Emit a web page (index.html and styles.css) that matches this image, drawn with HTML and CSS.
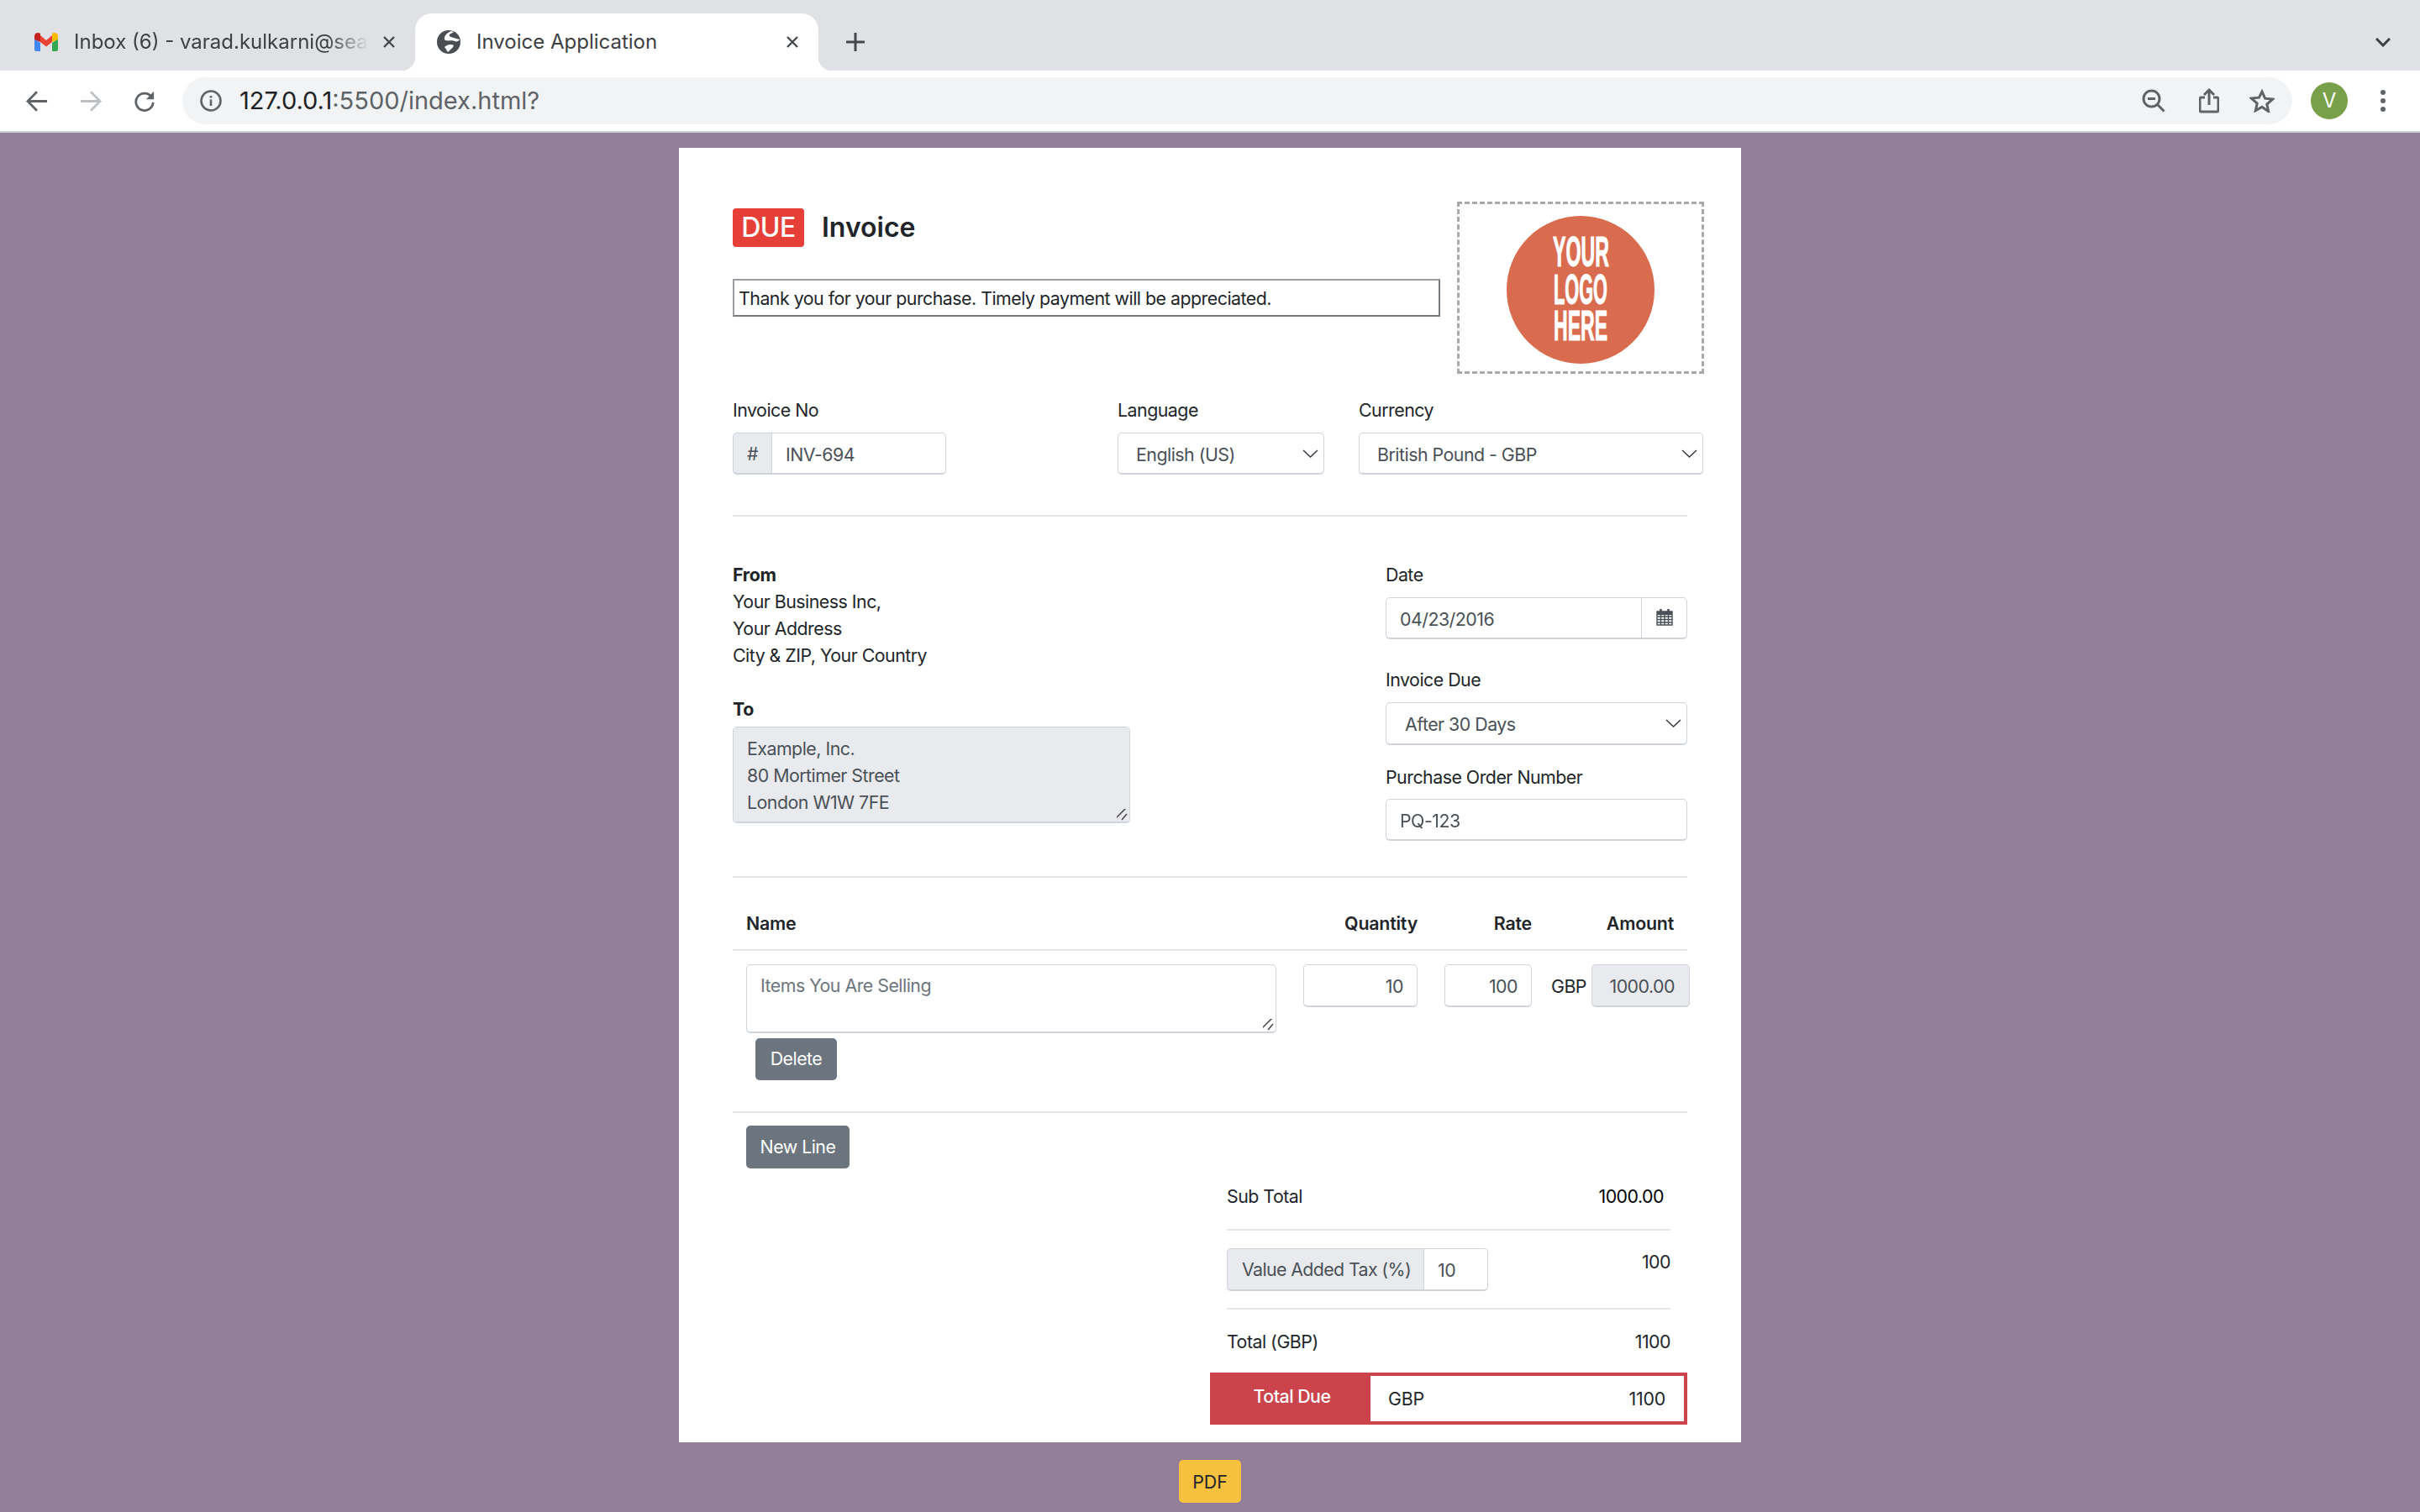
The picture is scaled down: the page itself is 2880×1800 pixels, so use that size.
FILE: index.html
```html
<!DOCTYPE html>
<html lang="en">
<head>
  <meta charset="UTF-8" />
  <meta name="viewport" content="width=device-width, initial-scale=1.0"/>
  <title>Invoice Application</title>
  <link rel="stylesheet" href="styles.css">
</head>
<body>
  <!-- Browser window bar -->
  <header class="browser">
    <div class="tab-strip">
      <div class="tab">
        <svg class="tab-icon" viewBox="0 0 30 24" width="30" height="24">
          <path d="M1 8l7 5v10H3a2 2 0 0 1-2-2z" fill="#4285f4"/>
          <path d="M22 13l7-5v13a2 2 0 0 1-2 2h-5z" fill="#34a853"/>
          <path d="M1 9V5C1 1 5.500 0 8 2v10z" fill="#c5221f"/>
          <path d="M22 2c2.500-2 7-1 7 3v4l-7 3z" fill="#fbbc04"/>
          <path d="M8 4l7 6 7-6v8l-7 5.500L8 12z" fill="#ea4335"/>
        </svg>
        <span class="tab-title tab-fade">Inbox (6) - varad.kulkarni@sear</span>
        <svg class="tab-close" viewBox="0 0 16 16" width="16" height="16"><path d="M2 2l12 12M14 2L2 14"/></svg>
      </div>
      <div class="tab tab-active">
        <svg class="tab-icon globe" viewBox="0 0 28 28" width="28" height="28">
          <circle cx="14" cy="14" r="14" fill="#4a4d52"/>
          <path fill="white" d="M17 1C12 3 8 7 9 11c2 3 9 0 12 2 2 1 5 0 6-2-2-1-5-1-7-2-4-1-6-2-5-4 1-1 4-2 5-3z"/>
          <path fill="white" d="M9 20c3-3 8-4 11-2-1 3-3 4-5 6-1 2-2 2-3 1 0-2-2-3-3-5z"/>
        </svg>
        <span class="tab-title">Invoice Application</span>
        <svg class="tab-close" viewBox="0 0 16 16" width="16" height="16"><path d="M2 2l12 12M14 2L2 14"/></svg>
      </div>
      <svg class="new-tab" viewBox="0 0 22 22" width="22" height="22"><path d="M11 0v22M0 11h22"/></svg>
      <svg class="tab-list" viewBox="0 0 18 11" width="18" height="11"><path d="M1 1l8 8 8-8"/></svg>
    </div>
    <div class="toolbar">
      <svg class="nav-icon" viewBox="0 0 28 26" width="26" height="25"><path d="M27 13H3M14 1L2 13l12 12"/></svg>
      <svg class="nav-icon nav-off" viewBox="0 0 28 26" width="26" height="25"><path d="M1 13h24M14 1l12 12-12 12"/></svg>
      <svg class="nav-icon" viewBox="0 0 28 28" width="26" height="26">
        <path d="M23 9a11 11 0 1 0 2 7"/>
        <path class="solid" d="M26 2v10H16z"/>
      </svg>
      <div class="omnibox">
        <svg class="info-icon" viewBox="0 0 26 26" width="26" height="26">
          <circle cx="13" cy="13" r="11.500"/>
          <path d="M13 11.500V19M13 7v2.600"/>
        </svg>
        <span class="url"><b>127.0.0.1</b>:5500/index.html?</span>
        <svg class="omni-icon" viewBox="0 0 28 28" width="28" height="28">
          <circle cx="11.500" cy="11.500" r="9.500"/>
          <path d="M7 11.500h9M18.500 18.500l8 8"/>
        </svg>
        <svg class="omni-icon omni-share" viewBox="0 0 24 30" width="24" height="30">
          <path d="M7 11H3a2 2 0 0 0-2 2v13a2 2 0 0 0 2 2h18a2 2 0 0 0 2-2V13a2 2 0 0 0-2-2h-4"/>
          <path d="M12 20V2M6 8l6-6 6 6"/>
        </svg>
        <svg class="omni-icon" viewBox="0 0 30 28" width="30" height="28">
          <path d="M15 3l3.600 8.200 8.900.9-6.700 5.900 1.900 8.700L15 21.300 7.300 25.700l1.900-8.700-6.700-5.900 8.900-.9z"/>
        </svg>
      </div>
      <div class="avatar">V</div>
      <div class="menu-dots"><i></i><i></i><i></i></div>
    </div>
  </header>

  <main class="sheet">
    <div class="head-row">
      <div class="head-left">
        <div class="title-row">
          <span class="badge-due">DUE</span>
          <h1>Invoice</h1>
        </div>
        <input class="note-input" type="text" value="Thank you for your purchase. Timely payment will be appreciated.">
      </div>
      <div class="logo-box">
        <svg viewBox="0 0 176 176" width="176" height="176">
          <circle cx="88" cy="88" r="88" fill="#d96c4f"/>
          <text transform="translate(55 60) scale(1 2.2)" class="logo-text" textLength="67" lengthAdjust="spacingAndGlyphs">YOUR</text>
          <text transform="translate(56 105) scale(1 2.2)" class="logo-text" textLength="64" lengthAdjust="spacingAndGlyphs">LOGO</text>
          <text transform="translate(56 148) scale(1 2.2)" class="logo-text" textLength="64" lengthAdjust="spacingAndGlyphs">HERE</text>
        </svg>
      </div>
    </div>

    <div class="meta-row">
      <div class="col-invoice">
        <label>Invoice No</label>
        <div class="input-group group-invoice">
          <span class="addon addon-hash">#</span>
          <input class="field" type="text" value="INV-694">
        </div>
      </div>
      <div class="col-language">
        <label>Language</label>
        <select class="field select-field"><option>English (US)</option></select>
      </div>
      <div class="col-currency">
        <label>Currency</label>
        <select class="field select-field"><option>British Pound - GBP</option></select>
      </div>
    </div>

    <hr class="rule rule-meta">

    <div class="address-row">
      <div class="address-left">
        <div><strong>From</strong></div>
        <div>Your Business Inc,</div>
        <div>Your Address</div>
        <div>City &amp; ZIP, Your Country</div>
        <div class="to-label"><strong>To</strong></div>
        <textarea class="field to-field" readonly>Example, Inc.
80 Mortimer Street
London W1W 7FE</textarea>
      </div>
      <div class="address-right">
        <label>Date</label>
        <div class="input-group">
          <input class="field" type="text" value="04/23/2016">
          <span class="addon addon-date">
            <svg viewBox="0 0 20 21" width="20" height="21">
              <path class="cal-fill" d="M1 4h18v4H1z"/>
              <path class="cal-line" d="M1 4h18v16H1zM1 10h18M1 13.500h18M1 17h18M5.500 8v12M10 8v12M14.500 8v12"/>
              <path class="cal-ring" d="M5.500 1v4M14.500 1v4"/>
            </svg>
          </span>
        </div>
        <label class="label-due">Invoice Due</label>
        <select class="field select-field select-due"><option>After 30 Days</option></select>
        <label class="label-order">Purchase Order Number</label>
        <input class="field" type="text" value="PQ-123">
      </div>
    </div>

    <hr class="rule rule-address">

    <div class="items-head">
      <div class="head-name">Name</div>
      <div class="head-num head-qty">Quantity</div>
      <div class="head-num head-rate">Rate</div>
      <div class="head-num head-amount">Amount</div>
    </div>

    <div class="item-line">
      <textarea class="field item-name" placeholder="Items You Are Selling"></textarea>
      <input class="field num-field qty-field" type="text" value="10">
      <input class="field num-field rate-field" type="text" value="100">
      <div class="amount-cell">
        <span class="amount-code">GBP</span>
        <input class="field num-field amount-field" type="text" value="1000.00" readonly>
      </div>
    </div>
    <button class="btn btn-delete">Delete</button>

    <hr class="rule rule-items">
    <button class="btn btn-new">New Line</button>

    <section class="totals">
      <div class="total-row sub-row"><span>Sub Total</span><span class="sub-value">1000.00</span></div>
      <hr class="rule rule-sub">
      <div class="total-row tax-row">
        <div class="input-group group-tax">
          <span class="addon addon-tax">Value Added Tax (%)</span>
          <input class="field" type="text" value="10">
        </div>
        <span>100</span>
      </div>
      <hr class="rule rule-tax">
      <div class="total-row grand-row"><span>Total (GBP)</span><span>1100</span></div>
      <div class="due-box">
        <div class="due-label">Total Due</div>
        <div class="due-value"><span>GBP</span><span>1100</span></div>
      </div>
    </section>
  </main>

  <div class="actions">
    <button class="btn btn-pdf">PDF</button>
  </div>
</body>
</html>
```

FILE: styles.css
```css
* {
  margin: 0;
  padding: 0;
  box-sizing: border-box;
}

html, body {
  height: 1800px;
  overflow: hidden;
}

body {
  font-family: Inter, "Noto Sans", sans-serif;
  font-size: 21.33px;
  line-height: 32px;
  color: #212529;
  background-color: #947f9b;
}

/* Browser bar */
.browser {
  height: 158px;
  background: white;
  border-bottom: 2px solid #d0d1d4;
}
.tab-strip {
  display: flex;
  align-items: flex-start;
  height: 84px;
  padding-top: 16px;
  background-color: #dfe1e5;
}
.tab {
  display: flex;
  align-items: center;
  width: 480px;
  height: 68px;
  padding: 0 23px 0 40px;
  color: #3c4043;
  font-size: 24px;
  position: relative;
}
.tab:first-child {
  width: 494px;
}
.tab-active {
  width: 480px;
  padding-left: 26px;
  color: #3c4043;
  background: white;
  border-radius: 20px 20px 0 0;
}
.tab-active::before,
.tab-active::after {
  content: "";
  position: absolute;
  bottom: 0;
  width: 16px;
  height: 16px;
}
.tab-active::before {
  left: -16px;
  background: radial-gradient(circle at 0 0, transparent 16px, white 16.5px);
}
.tab-active::after {
  right: -16px;
  background: radial-gradient(circle at 100% 0, transparent 16px, white 16.5px);
}
.tab-icon {
  flex: none;
}
.globe {
  margin-right: 19px;
}
.tab-title {
  flex: 1;
  overflow: hidden;
  white-space: nowrap;
}
.tab-fade {
  margin-left: 18px;
  margin-right: 16px;
  -webkit-mask-image: linear-gradient(to right, black 86%, transparent 100%);
  mask-image: linear-gradient(to right, black 86%, transparent 100%);
}
.tab-close {
  flex: none;
  fill: none;
  stroke: #45484d;
  stroke-width: 2.4;
}
.new-tab {
  margin: 23px 0 0 33px;
  fill: none;
  stroke: #45484d;
  stroke-width: 3;
}
.tab-list {
  margin: 29px 0 0 auto;
  margin-right: 35px;
  fill: none;
  stroke: #3c4043;
  stroke-width: 3;
}

.toolbar {
  display: flex;
  align-items: center;
  height: 72px;
  padding-left: 31px;
}
.nav-icon {
  flex: none;
  margin-right: 38px;
  fill: none;
  stroke: #5f6368;
  stroke-width: 3;
}
.nav-off {
  stroke: #bdc1c6;
}
.nav-icon .solid {
  fill: #5f6368;
  stroke: none;
}
.omnibox {
  display: flex;
  align-items: center;
  width: 2511px;
  height: 56px;
  margin-left: -6px;
  padding: 0 21px;
  border-radius: 28px;
  background-color: #f1f3f4;
}
.info-icon {
  flex: none;
  fill: none;
  stroke: #5f6368;
  stroke-width: 2.6;
}
.url {
  flex: 1;
  margin-left: 21px;
  font-size: 29px;
  color: #5f6368;
}
.url b {
  font-weight: 400;
  color: #202124;
}
.omni-icon {
  flex: none;
  margin-left: 36px;
  fill: none;
  stroke: #5f6368;
  stroke-width: 3;
}
.omni-share {
  margin-left: 40px;
}
.avatar {
  flex: none;
  width: 44px;
  height: 44px;
  margin-left: 22px;
  border-radius: 50%;
  background-color: #789f49;
  color: white;
  font-size: 24px;
  line-height: 44px;
  text-align: center;
}
.menu-dots {
  display: flex;
  flex-direction: column;
  gap: 4px;
  margin-left: 39px;
}
.menu-dots i {
  width: 6px;
  height: 6px;
  border-radius: 50%;
  background-color: #5f6368;
}

/* Invoice sheet */
.sheet {
  width: 1264px;
  height: 1541px;
  margin: 18px auto 0;
  padding: 64px 64px 21px;
  background: white;
  letter-spacing: -0.5px;
}
label {
  display: block;
}
strong {
  letter-spacing: -0.3px;
}
.rule {
  border: none;
  height: 2px;
  background-color: #e6e6e6;
}
.head-row {
  display: flex;
  gap: 20px;
  width: 1156px;
  height: 205px;
}
.head-left {
  width: 842px;
  padding-top: 8px;
}
.title-row {
  display: flex;
  align-items: center;
  gap: 21px;
  height: 46px;
}
.badge-due {
  width: 85px;
  height: 46px;
  border-radius: 4px;
  background-color: #e53f37;
  color: white;
  font-size: 32px;
  font-weight: 500;
  line-height: 46px;
  text-align: center;
}
h1 {
  font-size: 32px;
  font-weight: 600;
  line-height: 46px;
  letter-spacing: 0;
}
.note-input {
  display: block;
  width: 842px;
  height: 45px;
  margin-top: 38px;
  padding: 0 5px;
  border: 2px solid #767b80;
  border-top-color: #9a9ea2;
  border-left-color: #9a9ea2;
  font: inherit;
  letter-spacing: inherit;
  color: #212529;
}
.logo-box {
  display: flex;
  align-items: center;
  justify-content: center;
  width: 294px;
  height: 205px;
  padding-top: 5px;
  border: 3px dashed #a9a9a9;
}
.logo-text {
  font-family: "Liberation Sans", sans-serif;
  font-size: 22.5px;
  font-weight: 700;
  letter-spacing: 0;
  fill: white;
  stroke: white;
  stroke-width: 0.5;
}

.field {
  display: block;
  width: 100%;
  height: 50px;
  padding: 2px 16px 0;
  border: 2px solid #ced4da;
  border-width: 1px 1px 2px;
  border-radius: 5px;
  background-color: white;
  font: inherit;
  letter-spacing: inherit;
  color: #495057;
}
.select-field {
  height: 50px;
  padding-left: 21px;
  appearance: none;
  -webkit-appearance: none;
  background: white url("data:image/svg+xml,%3Csvg xmlns='http://www.w3.org/2000/svg' width='19' height='10'%3E%3Cpath d='M1 1l8.500 8 8.500-8' fill='none' stroke='%23343a40' stroke-width='1.500'/%3E%3C/svg%3E") no-repeat right 6px center;
}
textarea::-webkit-resizer {
  width: 20px;
  height: 20px;
  background: url("data:image/svg+xml,%3Csvg xmlns='http://www.w3.org/2000/svg' width='20' height='20'%3E%3Cpath d='M3 17L17 3M11 18l6-7' stroke='%23444' stroke-width='1.500'/%3E%3C/svg%3E") no-repeat right bottom;
}
.input-group {
  display: flex;
  margin-top: 10px;
}
.input-group .field {
  flex: 1;
  min-width: 0;
}
.addon {
  flex: none;
  display: flex;
  align-items: center;
  height: 50px;
  border: 1px solid #ced4da;
  border-bottom-width: 2px;
  background-color: #e9eaee;
  color: #495057;
}
.addon + .field {
  border-left: none;
  border-radius: 0 5px 5px 0;
}
.meta-row {
  display: flex;
  margin-top: 27px;
  width: 1156px;
}
.col-invoice {
  width: 458px;
}
.col-language {
  width: 246px;
  margin-right: 41px;
}
.col-currency {
  width: 410px;
}
.col-language .field,
.col-currency .field {
  margin-top: 11px;
}
.group-invoice {
  width: 254px;
  margin-top: 11px;
}
.addon-hash {
  width: 47px;
  justify-content: center;
  border-radius: 5px 0 0 5px;
}
.rule-meta {
  margin-top: 48px;
}

.address-row {
  display: flex;
  justify-content: space-between;
  margin-top: 53px;
}
.address-left {
  width: 473px;
}
.to-label {
  margin-top: 32px;
}
.to-field {
  height: 115px;
  margin-top: 5px;
  padding: 9px 16px;
  background-color: #e9eaee;
  resize: vertical;
}
.address-right {
  width: 359px;
}
.addon-date {
  width: 54px;
  justify-content: center;
  background: white;
  border-left: none;
  border-radius: 0 5px 5px 0;
}
.addon-date svg {
  margin: 0 0 2px 0;
}
.address-right .input-group {
  margin-top: 11px;
}
.address-right .input-group .field {
  border-radius: 5px 0 0 5px;
}
.cal-fill {
  fill: #495057;
}
.cal-line {
  fill: none;
  stroke: #495057;
  stroke-width: 1.4;
}
.cal-ring {
  fill: none;
  stroke: #495057;
  stroke-width: 2.6;
}
.label-due {
  margin-top: 32px;
}
.select-due {
  height: 51px;
  margin-top: 11px;
  padding-left: 22px;
}
.label-order {
  margin-top: 22px;
  margin-bottom: 10px;
}

.rule-address {
  margin-top: 42px;
}
.items-head,
.item-line {
  display: grid;
  grid-template-columns: 631px 32px 136px 32px 104px 23px 165px;
  padding-left: 16px;
  width: 1139px;
}
.items-head {
  height: 87px;
  padding-top: 38px;
  border-bottom: 2px solid #e6e6e6;
  width: 1136px;
  font-weight: 600;
  letter-spacing: -0.2px;
}
.head-num {
  text-align: right;
}
.head-qty {
  grid-column: 3;
}
.head-rate {
  grid-column: 5;
}
.head-amount {
  grid-column: 7;
  padding-right: 19px;
}
.item-line {
  margin-top: 16px;
}
.item-name {
  grid-column: 1;
  height: 82px;
  padding: 8px 16px 0;
  resize: vertical;
}
.item-name::placeholder {
  color: #6c757d;
}
.qty-field {
  grid-column: 3;
}
.rate-field {
  grid-column: 5;
}
.amount-cell {
  grid-column: 7;
  display: flex;
  align-items: center;
  justify-content: space-between;
  height: 51px;
}
.num-field {
  height: 51px;
  text-align: right;
}
.amount-code {
  font-size: 21.33px;
}
.amount-field {
  flex: none;
  width: 117px;
  padding: 2px 17px 0 16px;
  background-color: #e9eaee;
}
.btn {
  display: block;
  height: 50px;
  border: none;
  border-radius: 5px;
  font: inherit;
  letter-spacing: inherit;
  color: white;
  background-color: #6c757d;
}
.btn-delete {
  width: 97px;
  margin: 6px 0 0 27px;
  padding-bottom: 2px;
}
.rule-items {
  margin-top: 37px;
}
.btn-new {
  width: 123px;
  height: 51px;
  margin: 15px 0 0 16px;
  padding-bottom: 2px;
}

.totals {
  width: 528px;
  margin: 17px 0 0 588px;
}
.total-row {
  display: flex;
  justify-content: space-between;
}
.sub-value {
  margin-right: 8px;
  color: black;
}
.rule-sub {
  margin-top: 23px;
}
.tax-row {
  height: 51px;
  margin-top: 21px;
}
.group-tax {
  width: 311px;
  margin-top: 0;
}
.group-tax .field {
  height: 51px;
}
.addon-tax {
  width: 235px;
  height: 51px;
  padding-left: 17px;
  letter-spacing: -0.6px;
  border-radius: 5px 0 0 5px;
}
.rule-tax {
  margin-top: 20px;
}
.grand-row {
  margin-top: 22px;
}
.due-box {
  display: flex;
  width: 568px;
  height: 62px;
  margin: 21px 0 0 -20px;
  border: 4px solid #cb444b;
  background-color: #cb444b;
}
.due-label {
  flex: none;
  width: 187px;
  padding-bottom: 6px;
  color: white;
  font-weight: 500;
  line-height: 48px;
  text-align: center;
}
.due-value {
  flex: 1;
  display: flex;
  justify-content: space-between;
  padding: 0 22px 0 21px;
  background: white;
  line-height: 54px;
  letter-spacing: -0.2px;
}

.actions {
  display: flex;
  justify-content: center;
  margin-top: 21px;
}
.btn-pdf {
  width: 74px;
  height: 51px;
  background-color: #f5c13f;
  color: #212529;
}
```
